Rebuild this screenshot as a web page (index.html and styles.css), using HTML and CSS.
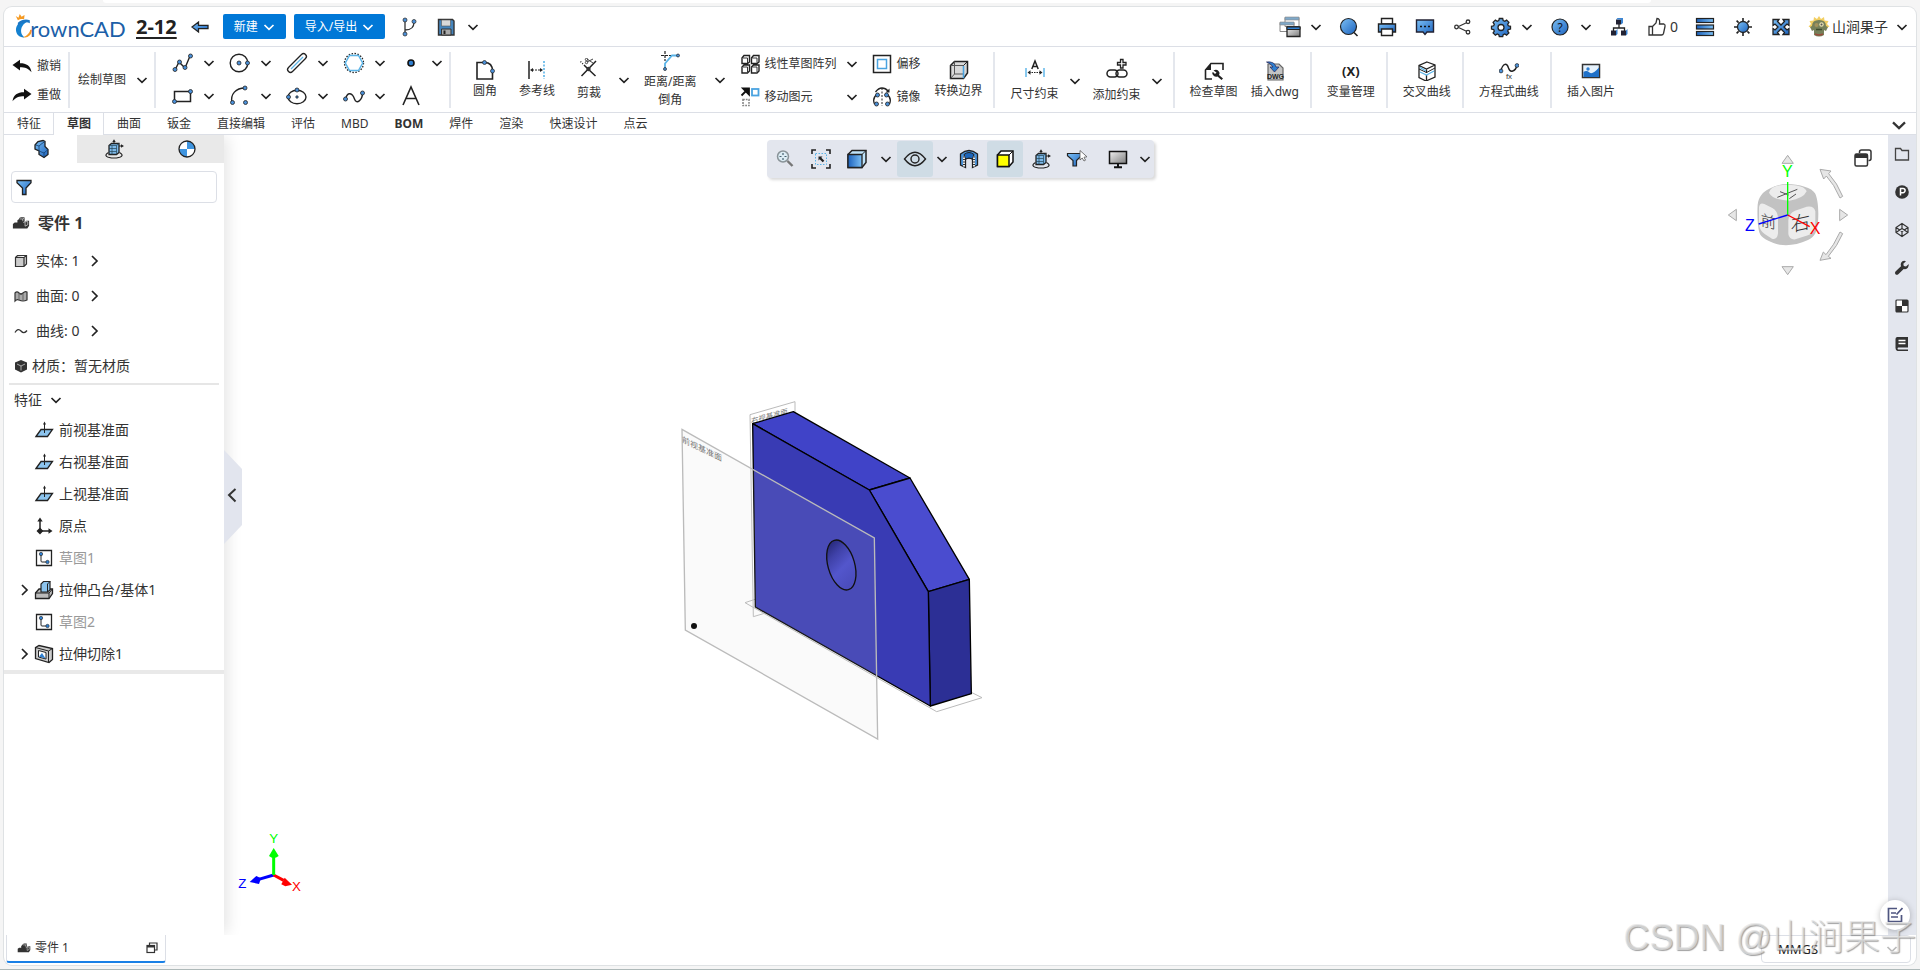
FILE: index.html
```html
<!DOCTYPE html>
<html lang="zh-CN">
<head>
<meta charset="utf-8">
<title>CrownCAD 2-12</title>
<link rel="stylesheet" href="styles.css">
</head>
<body>
<svg class="sprite" width="0" height="0" aria-hidden="true">
  <defs>
    <linearGradient id="blue" x1="0" y1="0" x2="1" y2="1"><stop offset="0" stop-color="#7cc0f5"/><stop offset="1" stop-color="#1c62bd"/></linearGradient>
    <linearGradient id="blueH" x1="0" y1="0" x2="1" y2="0"><stop offset="0" stop-color="#1c62bd"/><stop offset="1" stop-color="#7cc0f5"/></linearGradient>
    <linearGradient id="gray" x1="0" y1="0" x2="1" y2="1"><stop offset="0" stop-color="#f0f0f0"/><stop offset="1" stop-color="#7c7c7c"/></linearGradient>
    <linearGradient id="hole" x1="0" y1="0" x2="0.3" y2="1"><stop offset="0" stop-color="#1d1f66"/><stop offset="0.35" stop-color="#3f41a8"/><stop offset="0.65" stop-color="#5356cc"/><stop offset="1" stop-color="#4b4dbd"/></linearGradient>
  </defs>
  <symbol id="down" viewBox="0 0 12 12"><path d="M1.500 4L6 8.300 10.500 4" fill="none" stroke="currentColor" stroke-width="1.700"/></symbol>
  <symbol id="next" viewBox="0 0 12 12"><path d="M3 1l5 5-5 5" fill="none" stroke="currentColor" stroke-width="1.700"/></symbol>
  <symbol id="plane" viewBox="0 0 20 20"><path d="M2 16.500L7 9.500h11.500l-5 7z" fill="#8cc4ee" stroke="#222" stroke-width="1.300"/><path d="M10.500 13V3" stroke="#222"/><path d="M9 4.500l1.500-3L12 4.500z" fill="#222"/></symbol>
  <symbol id="sketch" viewBox="0 0 20 20"><path d="M2.500 2.500h15v15h-15z" fill="#fff" stroke="#222" stroke-width="1.300"/><path d="M7 6v7q0 1 1 1h5" fill="none" stroke="#222"/><circle cx="7" cy="6" r="1.700" fill="#2f7fd0" stroke="#222" stroke-width=".6"/><circle cx="13.500" cy="14" r="1.700" fill="#2f7fd0" stroke="#222" stroke-width=".6"/></symbol>
  <symbol id="part" viewBox="0 0 20 14"><path d="M1 13V8l2-1.500h3V4l2-1.500V1.500L10 .5h4v5l2-1h3v5.500L17 13z" fill="#333"/><path d="M8.500 2.500h3.500V5M12 2.500L14 1M12.500 6.500l2-1v5l3-1.500V5.500h-3" fill="none" stroke="#ddd" stroke-width=".8"/></symbol>
  <symbol id="turn" viewBox="0 0 20 20"><path d="M4.500 13.500C-1 16.500 3 19 10 19s11-2.500 5.500-5.500" fill="none" stroke="#222" stroke-width="1.200"/><path d="M5 6.500l2.500-2H15v9l-2.500 2H5z" fill="#7db8e8" stroke="#222" stroke-width="1.300"/><path d="M5 6.500h7.500v9M12.500 6.500L15 4.500M5 9.500h7.500M5 12.500h7.500M8 6.500v9" fill="none" stroke="#245" stroke-width=".7"/><path d="M10 4.500V2M15 7h3" stroke="#222"/><path d="M8.300 3L10 .3 11.700 3zM17 5.200L20 7l-3 1.800z" fill="#222"/></symbol>
  <symbol id="filter" viewBox="0 0 18 18"><path d="M2 2.500h14v2.200L11 10v6.500H7.500V10L2 4.700z" fill="url(#blue)" stroke="#222" stroke-width="1.300"/></symbol>
  <symbol id="undo" viewBox="0 0 20 14"><path d="M.5 6L8 .8v3.400c6.500 0 10.500 2.500 11.500 9C16.500 9.500 13 8.200 8 8.200v3.300z" fill="#111"/></symbol>
</svg>

<div class="browser-strip"></div>
<div class="app">
  <header class="header">
    <svg class="logo" width="112" height="28" viewBox="0 0 112 28" role="img" aria-label="CrownCAD">
      <path d="M15 7.500C7 6 1 11 1 17c0 5 4 8.500 9 8C6 22 5.500 17 7.500 13.500 9 10.500 12 8.500 15 7.500z" fill="#1581d0"/>
      <path d="M16 17c-1 4-4 7-8 7.500 4 1.500 9-.5 10-7.500z" fill="#f59a23"/><path d="M3 9.500C7 6 12 5.500 15.500 7v3C12 8 7 9 3 13z" fill="#1b77c5"/>
      <path d="M3 7L.8 2.500l2.800 1.700L5 .5l1.900 2.800L10 1.500l-.5 4.500C7 5.300 5 6 3 7z" fill="#f59a23"/>
      <text x="16" y="24" class="logo-text">rownCAD</text>
    </svg>
    <a class="doc-name" href="#">2-12</a>
    <button class="plain" aria-label="返回"><svg width="18" height="14" viewBox="0 0 18 14"><path d="M1 7l6.500-5v3.300H17v3.400H7.500V12z" fill="url(#blue)" stroke="#222" stroke-width="1.300"/></svg></button>
    <div class="primary-pair">
      <button class="primary">新建<svg class="chev"><use href="#down"/></svg></button>
      <button class="primary">导入/导出<svg class="chev"><use href="#down"/></svg></button>
    </div>
    <button class="plain" aria-label="分支"><svg class="i22" viewBox="0 0 22 22"><path d="M6 4v14M6 14c6 0 9-2 9-8" fill="none" stroke="#333" stroke-width="1.300"/><g fill="#4a90d9" stroke="#333" stroke-width=".8"><circle cx="6" cy="4" r="2"/><circle cx="15" cy="5.500" r="2"/><circle cx="6" cy="18" r="2"/></g></svg></button>
    <div class="pair-10">
      <button class="plain" aria-label="保存"><svg class="i22" viewBox="0 0 22 22"><path d="M3.500 3.500h14l1.500 1.500v14H3.500z" fill="#4585bd" stroke="#333" stroke-width="1.400"/><path d="M6.500 4h9v6h-9z" fill="#d9d9d9" stroke="#555" stroke-width=".6"/><path d="M6.500 13h9.500v6H6.500z" fill="#aaa" stroke="#333"/><path d="M8.500 14.500h2V18h-2z" fill="#222"/></svg></button>
      <button class="plain" aria-label="保存选项"><svg class="chev"><use href="#down"/></svg></button>
    </div>
    <nav class="header-right">
      <div class="pair-9"><button class="plain" aria-label="窗口"><svg class="i22" viewBox="0 0 22 22"><path d="M6 1.500h14v9H6zM1 6.500h14v9H1z" fill="#fff" stroke="#888"/><path d="M6 1h14v3H6zM1 6h14v3H1z" fill="#7fa9c9" stroke="#888" stroke-width=".6"/><path d="M8 11h13v9.500H8z" fill="url(#gray)" stroke="#222" stroke-width="1.300"/><path d="M8 11h13v2.500H8z" fill="#2f7fd0" stroke="#222"/></svg></button><button class="plain" aria-label="窗口选项"><svg class="chev"><use href="#down"/></svg></button></div>
      <button class="plain" aria-label="搜索"><svg class="i22" viewBox="0 0 22 22"><circle cx="10.500" cy="10.500" r="8" fill="url(#blue)" stroke="#222" stroke-width="1.200"/><path d="M16 16.500l3.500 3.500" stroke="#222" stroke-width="1.600"/></svg></button>
      <button class="plain" aria-label="打印"><svg class="i22" viewBox="0 0 22 22"><path d="M5.500 2.500h11V8h-11z" fill="#fff" stroke="#222" stroke-width="1.400"/><path d="M2.500 8h17v8h-17z" fill="url(#blue)" stroke="#222" stroke-width="1.400"/><path d="M5.500 13h11v6.500h-11z" fill="#fff" stroke="#222" stroke-width="1.400"/></svg></button>
      <button class="plain" aria-label="消息"><svg class="i22" viewBox="0 0 22 22"><path d="M2.500 4h17v12H13l-2 2.500L9 16H2.500z" fill="url(#blue)" stroke="#223" stroke-width="1.400"/><path d="M6 10.500h2M10 10.500h2M14 10.500h2" stroke="#111" stroke-width="1.600"/></svg></button>
      <button class="plain" aria-label="分享"><svg class="i22" viewBox="0 0 22 22"><path d="M5.500 11l10.500-5M5.500 11L16 16" stroke="#333" stroke-width="1.300"/><g fill="#fff" stroke="#333" stroke-width="1.300"><circle cx="4.500" cy="11" r="1.800"/><circle cx="16" cy="5.800" r="1.800"/><circle cx="16" cy="16.200" r="1.800"/></g></svg></button>
      <div class="pair-9"><button class="plain" aria-label="设置"><svg class="i22" viewBox="0 0 22 22"><g transform="translate(0 -1)"><path d="M9.300 3.500h3.400l.5 2.100 1.600.7 1.800-1.200 2.300 2.300-1.200 1.900.6 1.500 2.200.5v2.800l-2.200.5-.6 1.500 1.200 1.900-2.300 2.200-1.800-1.200-1.600.7-.5 2H9.300l-.5-2-1.600-.7-1.800 1.200-2.300-2.200 1.200-1.900-.6-1.500-2.200-.5v-2.800l2.200-.5.6-1.500-1.200-1.900 2.300-2.300 1.800 1.200 1.600-.7z" fill="url(#blue)" stroke="#222" stroke-width="1.300"/><circle cx="11" cy="12.500" r="3" fill="#fff" stroke="#222" stroke-width="1.300"/></g></svg></button><button class="plain" aria-label="设置选项"><svg class="chev"><use href="#down"/></svg></button></div>
      <div class="pair-9"><button class="plain" aria-label="帮助"><svg class="i22" viewBox="0 0 22 22"><circle cx="11" cy="11" r="8" fill="url(#blue)" stroke="#222" stroke-width="1.200"/><text x="11" y="15.500" text-anchor="middle" font-size="12" fill="#112">?</text></svg></button><button class="plain" aria-label="帮助选项"><svg class="chev"><use href="#down"/></svg></button></div>
      <button class="plain" aria-label="结构"><svg class="i22" viewBox="0 0 22 22"><path d="M11 8v4M5.500 15v-3h11v3" fill="none" stroke="#222" stroke-width="1.300"/><path d="M8 3.500h5v5H8zM3 14.500h5v5H3zM13 14.500h5v5h-5z" fill="#223"/><path d="M8 3.500L9.500 2H15l-2 1.500zM13 3.500L15 2v5l-2 1.500zM8 14.500L9.500 13v5L8 19.500zM18 14.500l1.500-1.500v5L18 19.500z" fill="#3c86d4"/></svg></button>
      <button class="plain like"><svg class="i22" viewBox="0 0 22 22"><path d="M3 10.500h3.500v8.500H3zM6.500 10.500L10 7l1-4.500c2.500 0 3 2 2.500 5.500H18q1.500.5 1 2.500l-1.500 7q-.5 1.500-2 1.500h-9" fill="none" stroke="#333" stroke-width="1.300"/></svg>0</button>
      <button class="plain" aria-label="列表"><svg class="i22" viewBox="0 0 22 22"><g fill="url(#blueH)" stroke="#222" stroke-width="1.200"><rect x="2.500" y="2.500" width="17" height="4"/><rect x="2.500" y="9" width="17" height="4"/><rect x="2.500" y="15.500" width="17" height="4"/></g></svg></button>
      <button class="plain" aria-label="亮度"><svg class="i22" viewBox="0 0 22 22"><path d="M11 2v3M11 17v3M2 11h3M17 11h3M4.600 4.600l2 2M15.400 15.400l2 2M4.600 17.400l2-2M15.400 6.600l2-2" stroke="#222" stroke-width="1.600"/><circle cx="11" cy="11" r="5.500" fill="url(#blue)" stroke="#222" stroke-width="1.300"/></svg></button>
      <button class="plain" aria-label="全屏"><svg class="i22" viewBox="0 0 22 22"><path d="M3 3.500h6L7.500 5.500l3.500 3.500 3.500-3.500L13 3.500h6v6L17 8l-3 3 3 3 2-1.500v6h-6l1.500-2-3.500-3.500-3.500 3.500 1.500 2H3v-6L5 14l3-3-3-3-2 1.500z" fill="url(#blue)" stroke="#222" stroke-width="1.300"/></svg></button>
      <button class="plain user"><svg class="i22" viewBox="0 0 22 22"><path d="M11 0l2 3 3-2 .5 3.500 4 .5-1.500 3 2.500 2.500-3 1.500H3.500L.5 10.500 3 8 1.500 5l4-.5L6 1l3 2z" fill="#f2cf63"/><path d="M4 10q0-6 7-6t7 6l2 1-2 4-2-1v5q-5 3-10 0v-5l-2 1-2-4z" fill="#76805a"/><circle cx="8.500" cy="9" r="2" fill="#a3925c"/><circle cx="13.500" cy="8.500" r="2.200" fill="#e6dfb0"/><circle cx="13.500" cy="8.500" r="1" fill="#555"/><path d="M8 13.500h6" stroke="#3e4a2d" stroke-width="1.500"/><path d="M7 18q4 2 8 0" stroke="#9b4b3c" stroke-width="1.500" fill="none"/></svg><span>山涧果子</span><svg class="chev"><use href="#down"/></svg></button>
    </nav>
  </header>

  <div class="ribbon">
    <div class="group history">
      <button class="row-tool"><svg width="20" height="14"><use href="#undo"/></svg>撤销</button>
      <button class="row-tool"><svg class="flip" width="20" height="14"><use href="#undo"/></svg>重做</button>
    </div>
    <div class="group draw"><button class="plain draw-btn">绘制草图<svg class="chev"><use href="#down"/></svg></button></div>
    <div class="group shapes">
      <button class="shape" aria-label="折线"><svg class="i24" viewBox="0 0 24 24"><path d="M4 19l4-8 6 6 5-12" fill="none" stroke="#222" stroke-width="1.400"/><g fill="#4a90d9" stroke="#222" stroke-width=".8"><circle cx="4" cy="18.500" r="2"/><circle cx="8.500" cy="11" r="2"/><circle cx="14" cy="16.500" r="2"/><circle cx="19.500" cy="5" r="2"/></g></svg><svg class="chev"><use href="#down"/></svg></button>
      <button class="shape" aria-label="圆"><svg class="i24" viewBox="0 0 24 24"><circle cx="11" cy="12" r="8.800" fill="none" stroke="#222" stroke-width="1.400"/><g fill="#4a90d9" stroke="#222" stroke-width=".8"><circle cx="11" cy="12" r="2"/><circle cx="19.500" cy="12" r="2"/></g></svg><svg class="chev"><use href="#down"/></svg></button>
      <button class="shape" aria-label="直槽口"><svg class="i24" viewBox="0 0 24 24"><path d="M5.500 18.500l13-13" stroke="#222" stroke-width="7" stroke-linecap="round"/><path d="M5.500 18.500l13-13" stroke="#fff" stroke-width="4.400" stroke-linecap="round"/><path d="M6 18L18 6" stroke="#5ab4e8" stroke-width="1.300"/></svg><svg class="chev"><use href="#down"/></svg></button>
      <button class="shape" aria-label="多边形"><svg class="i24" viewBox="0 0 24 24"><circle cx="12" cy="12" r="9.500" fill="none" stroke="#222" stroke-width="1.300" stroke-dasharray="1.500 1.500"/><path d="M7.500 4.500h9l4.200 7.500-4.200 7.500h-9L3.300 12z" fill="none" stroke="#5ab4e8" stroke-width="1.500"/></svg><svg class="chev"><use href="#down"/></svg></button>
      <button class="shape" aria-label="点"><svg class="i24" viewBox="0 0 24 24"><circle cx="12" cy="12" r="3" fill="#2f7fd0" stroke="#111" stroke-width="1.600"/></svg><svg class="chev"><use href="#down"/></svg></button>
      <button class="shape" aria-label="矩形"><svg class="i24" viewBox="0 0 24 24"><path d="M3.500 7.500h16v10h-16z" fill="none" stroke="#222" stroke-width="1.500"/><g fill="#4a90d9" stroke="#222" stroke-width=".8"><circle cx="19.500" cy="7.500" r="2"/><circle cx="3.500" cy="17.500" r="2"/></g></svg><svg class="chev"><use href="#down"/></svg></button>
      <button class="shape" aria-label="圆弧"><svg class="i24" viewBox="0 0 24 24"><path d="M4 19C2 10 8 4 17 4" fill="none" stroke="#222" stroke-width="1.400"/><g fill="#4a90d9" stroke="#222" stroke-width=".8"><circle cx="4.500" cy="18.500" r="2"/><circle cx="17" cy="4" r="2"/><circle cx="17.500" cy="18.500" r="2"/></g></svg><svg class="chev"><use href="#down"/></svg></button>
      <button class="shape" aria-label="椭圆"><svg class="i24" viewBox="0 0 24 24"><ellipse cx="12" cy="13" rx="9" ry="6.800" fill="none" stroke="#222" stroke-width="1.400"/><g fill="#4a90d9" stroke="#222" stroke-width=".8"><circle cx="12" cy="6" r="2"/><circle cx="3.500" cy="13" r="2"/><circle cx="12" cy="13" r="1.200"/></g></svg><svg class="chev"><use href="#down"/></svg></button>
      <button class="shape" aria-label="样条"><svg class="i24" viewBox="0 0 24 24"><path d="M3.500 15c2-8 7-6 9 0s8 1 8-6" fill="none" stroke="#222" stroke-width="1.400"/><g fill="#4a90d9" stroke="#222" stroke-width=".8"><circle cx="3.500" cy="15" r="2"/><circle cx="20.500" cy="9" r="2"/></g></svg><svg class="chev"><use href="#down"/></svg></button>
      <button class="shape" aria-label="文字"><svg class="i24" viewBox="0 0 24 24"><path d="M4 21l8-18 8 18M7 14.500h10" fill="none" stroke="#222" stroke-width="1.600"/></svg></button>
    </div>
    <div class="group edit">
      <div class="edit-a">
        <button class="tool"><svg class="i20" viewBox="0 0 20 20"><path d="M2 2.500h7.500c5 0 8 3 8 8.500v8H2z" fill="none" stroke="#222" stroke-width="1.600"/><g fill="#4a90d9" stroke="#222" stroke-width=".7"><circle cx="9.500" cy="2.500" r="2"/><circle cx="17.500" cy="11" r="2"/></g></svg>圆角</button>
        <button class="tool"><svg class="i20" viewBox="0 0 20 20"><path d="M2 1v18" stroke="#222" stroke-width="1.500"/><path d="M17 1v18" stroke="#5ab4e8" stroke-width="1.600" stroke-dasharray="2 1.500"/><path d="M5 10h9" stroke="#222" stroke-dasharray="2 1"/><path d="M3 10l3-2v4zM16 10l-3-2v4z" fill="#222"/></svg>参考线</button>
        <div class="split"><button class="tool loose"><svg class="i20" viewBox="0 0 20 20"><path d="M2.500 18L17 3M8 10l8.500 8M8 10L5 7" stroke="#222" stroke-width="1.500"/><path d="M1.500 3.500L5 7" stroke="#222" stroke-width="1.300" stroke-dasharray="1 1.500"/><circle cx="9.500" cy="11" r="2.200" fill="#333"/><path d="M8 4l6-3M8 1l6 4" stroke="#444"/><circle cx="7.500" cy="1.500" r="1.200" fill="none" stroke="#444"/><circle cx="7.500" cy="4.500" r="1.200" fill="none" stroke="#444"/></svg>剪裁</button><button class="plain" aria-label="剪裁选项"><svg class="chev"><use href="#down"/></svg></button></div>
      </div>
      <div class="split"><button class="tool"><svg class="i20" viewBox="0 0 20 20"><path d="M1 4.500h10M5 0v10" stroke="#222" stroke-width="1.200" stroke-dasharray="3 1"/><path d="M5 18v-5.500L12 4.500h6" fill="none" stroke="#5ab4e8" stroke-width="1.800"/><g fill="#4a90d9" stroke="#222" stroke-width=".7"><circle cx="5" cy="18" r="1.500"/><circle cx="18" cy="4.500" r="1.500"/></g></svg>距离/距离<br>倒角</button><button class="plain" aria-label="倒角选项"><svg class="chev"><use href="#down"/></svg></button></div>
      <div class="stack">
        <button class="row-tool wide"><svg class="i20" viewBox="0 0 20 20"><g fill="#fff" stroke="#222" stroke-width="1.400"><path d="M2 4l2-2.500h5.500V8l-2 1.500H2zM11.500 4l2-2.500H19V8l-2 1.500h-5.500zM2 13l2-2h5.500v6l-2 2H2zM11.500 13l2-2H19v6l-2 2h-5.500z"/><path d="M2 4h5.500v5M11.500 4H17v5M2 13h5.500v5.500M11.500 13H17v5.500" stroke-width=".9"/></g></svg><span>线性草图阵列</span><svg class="chev"><use href="#down"/></svg></button>
        <button class="row-tool wide"><svg class="i20" viewBox="0 0 20 20"><path d="M1.500 8.500l5-5M3 1.500h6v6z" fill="#111" stroke="#111" stroke-width="1.800"/><rect x="12" y="2" width="6.500" height="6.500" fill="#fff" stroke="#4aa3e0" stroke-width="1.800"/><rect x="3" y="12.500" width="6" height="6" fill="none" stroke="#888" stroke-width="1.600" stroke-dasharray="1.800 1"/></svg><span>移动图元</span><svg class="chev"><use href="#down"/></svg></button>
      </div>
      <div class="stack">
        <button class="row-tool"><svg class="i20" viewBox="0 0 20 20"><rect x="1.500" y="1.500" width="17" height="17" fill="#fff" stroke="#222" stroke-width="1.500"/><rect x="5.500" y="5.500" width="9" height="9" fill="#fff" stroke="#4aa3e0" stroke-width="1.500"/></svg>偏移</button>
        <button class="row-tool"><svg class="i20" viewBox="0 0 20 20"><path d="M10 1v18" stroke="#222" stroke-dasharray="2 1.500"/><path d="M3.500 5Q6.500 1 10 1t6 3M5 7.500Q0 11 2.500 17M15 7.500q5 3.500 2.500 9.500" fill="none" stroke="#222" stroke-width="1.300"/><path d="M17.500 1.500v4h-4z" fill="#222"/><g fill="#4a90d9" stroke="#222" stroke-width=".8"><circle cx="5.500" cy="8" r="2"/><circle cx="14.500" cy="8" r="2"/><circle cx="4.500" cy="17" r="2"/><circle cx="15.500" cy="17" r="2"/></g></svg>镜像</button>
      </div>
      <button class="tool"><svg class="i20" viewBox="0 0 20 20"><path d="M1.500 5.500l4-4h13V13l-4 5.500h-13z" fill="#d8d8d8" stroke="#222" stroke-width="1.500"/><path d="M1.500 5.500h13v13M5.500 1.500V14M1.500 18.500L5.500 14h9" fill="none" stroke="#555"/><path d="M14.500 5.500l4-4" stroke="#222"/><path d="M14.500 6v12" stroke="#4aa3e0" stroke-width="1.600"/></svg>转换边界</button>
    </div>
    <div class="group constrain">
      <div class="split tight"><button class="tool loose"><svg class="i20" viewBox="0 0 20 20"><path d="M1 9v9M19 9v9" stroke="#6bbcec" stroke-width="1.600"/><path d="M4 13.500h12" stroke="#222" stroke-dasharray="1.500 1"/><path d="M2.500 13.500l3-2.200v4.400zM17.500 13.500l-3-2.200v4.400z" fill="#222"/><path d="M6.800 10L10 2l3.200 8M8 7.500h4" fill="none" stroke="#222" stroke-width="1.500"/></svg>尺寸约束</button><button class="plain" aria-label="尺寸约束选项"><svg class="chev"><use href="#down"/></svg></button></div>
      <div class="split tight"><button class="tool loose"><svg class="i22" viewBox="0 0 22 22"><rect x="1" y="12" width="11" height="7" rx="3.500" fill="none" stroke="#222" stroke-width="1.500"/><rect x="10" y="12" width="11" height="7" rx="3.500" fill="none" stroke="#222" stroke-width="1.500"/><path d="M14.500 1.500h2.500V4.500h3V7h-3v3h-2.500V7h-3V4.500h3z" fill="#fff" stroke="#222" stroke-width="1.300"/></svg>添加约束</button><button class="plain" aria-label="添加约束选项"><svg class="chev"><use href="#down"/></svg></button></div>
    </div>
    <div class="group check">
      <button class="tool"><svg class="i20" viewBox="0 0 20 20"><path d="M8 18H1.500V9L7 2.500h12V9" fill="none" stroke="#222" stroke-width="1.600"/><path d="M1.500 9L7 2.500V9z" fill="#222"/><path d="M9.500 9.500q3-1.500 5 .5t.5 4l4 3.500-1.500 1.500-4-3.500q-3 1-4.500-1.500t0-3l2 2 1.500-1.500z" fill="#222"/></svg>检查草图</button>
      <button class="tool"><svg class="i20" viewBox="0 0 20 20"><path d="M3 3h11l4 4v12H3z" fill="#c4c4c4" stroke="#666" stroke-width="1.200"/><text x="10.500" y="17.500" text-anchor="middle" class="dwg">DWG</text><path d="M1.500 1q8-1 9.500 5h3l-4.500 5L5 6h3Q6 2.500 1.500 1z" fill="#2f7fd0" stroke="#225" stroke-width=".7"/></svg>插入dwg</button>
    </div>
    <div class="group"><button class="tool"><span class="var">(X)</span>变量管理</button></div>
    <div class="group"><button class="tool"><svg class="i20" viewBox="0 0 20 20"><path d="M10 1l8 3v12l-9 4-7-3.500V4.500zM2 4.500L9.500 8 18 4M9.500 8v4M9.500 14v5.500" fill="none" stroke="#222" stroke-width="1.300"/><path d="M2 8l7.500 3.500L18 7" fill="none" stroke="#222" stroke-width="1"/><path d="M3 11l6.500 3L17 10M3 6.500l6 3.500" fill="none" stroke="#5ab4e8" stroke-width="1.200"/></svg>交叉曲线</button></div>
    <div class="group"><button class="tool"><svg class="i20" viewBox="0 0 20 20"><path d="M1.500 11C4 1 8 2 9.500 7s7 4 8.500-3" fill="none" stroke="#222" stroke-width="1.400"/><g fill="#4a90d9" stroke="#222" stroke-width=".7"><circle cx="2" cy="10" r="1.900"/><circle cx="18" cy="4.500" r="1.900"/></g><text x="10" y="18" text-anchor="middle" class="fx">fx</text></svg>方程式曲线</button></div>
    <div class="group last"><button class="tool"><svg class="i20" viewBox="0 0 20 20"><rect x="1.500" y="3.500" width="17" height="13" fill="#e6f2fc" stroke="#333" stroke-width="1.500"/><path d="M2.500 11q3-2 6 .5t9.500-5V16H2.500z" fill="#1f71c9"/><circle cx="7" cy="8" r="1.700" fill="#2f7fd0"/></svg>插入图片</button></div>
  </div>

  <nav class="tabs">
    <button class="tab first">特征</button><button class="tab active">草图</button><button class="tab">曲面</button><button class="tab">钣金</button><button class="tab">直接编辑</button><button class="tab">评估</button><button class="tab">MBD</button><button class="tab strong">BOM</button><button class="tab">焊件</button><button class="tab">渲染</button><button class="tab">快速设计</button><button class="tab">点云</button>
    <button class="plain collapse" aria-label="收起"><svg width="16" height="16"><use href="#down"/></svg></button>
  </nav>

  <main class="body">
    <aside class="side">
      <div class="side-tabs">
        <button class="side-tab on" aria-label="特征树"><svg class="i20" viewBox="0 0 20 20"><path d="M4 6l3-3.500 5-1 2 1v5l3 3v5l-4 3-5-3v-3.500l-4-2z" fill="url(#blue)" stroke="#222" stroke-width="1.300"/><path d="M4.500 6L8 7v5l5 2v4M8 7l3-2.500 3-2M13 14l4-3.500" fill="none" stroke="#14406f" stroke-width=".8"/></svg></button>
        <button class="side-tab" aria-label="视图"><svg class="i20"><use href="#turn"/></svg></button>
        <button class="side-tab" aria-label="外观"><svg class="i20" viewBox="0 0 20 20"><circle cx="10" cy="10" r="8" fill="#fff"/><path d="M10 10V2a8 8 0 0 1 8 8zM10 10v8a8 8 0 0 1-8-8z" fill="#3f95e0"/><circle cx="10" cy="10" r="8" fill="none" stroke="#222" stroke-width="1.300"/></svg></button>
      </div>
      <label class="search"><svg width="18" height="18"><use href="#filter"/></svg><input type="text" aria-label="过滤"></label>
      <h1 class="part-title"><svg width="18" height="14"><use href="#part"/></svg>零件 1</h1>
      <ul class="stats">
        <li><svg class="i14" viewBox="0 0 14 14"><path d="M1.500 3.500l2-2h9v8.500l-2.500 2.500H1.500zM10 3.500v9M1.500 3.500H10l2.500-2" fill="#ccc" stroke="#333" stroke-width="1.200"/></svg><span>实体: 1</span><svg class="chev"><use href="#next"/></svg></li>
        <li><svg class="i14" viewBox="0 0 14 14"><path d="M1 4q2-2 4 0t4 0 4-1v8q-2 1-4 1t-4-1-4 1z" fill="#aaa" stroke="#333" stroke-width="1.200"/><path d="M5 4v7.500M9 4.500V12" stroke="#666"/></svg><span>曲面: 0</span><svg class="chev"><use href="#next"/></svg></li>
        <li><svg class="i14" viewBox="0 0 14 14"><path d="M1 8.500q3-5 6-1.500t6-.5" fill="none" stroke="#333" stroke-width="1.300"/></svg><span>曲线: 0</span><svg class="chev"><use href="#next"/></svg></li>
        <li class="material"><svg class="i14" viewBox="0 0 14 14"><path d="M7 1l6 2.500v7L7 13.500 1 10.500v-7z" fill="#333"/><path d="M3 5l4 2 4-2M7 7v4.500" fill="none" stroke="#ccc" stroke-width=".8"/></svg><span>材质：暂无材质</span></li>
      </ul>
      <button class="tree-head">特征<svg class="chev"><use href="#down"/></svg></button>
      <ul class="tree">
        <li><svg class="i20"><use href="#plane"/></svg>前视基准面</li>
        <li><svg class="i20"><use href="#plane"/></svg>右视基准面</li>
        <li><svg class="i20"><use href="#plane"/></svg>上视基准面</li>
        <li><svg class="i20" viewBox="0 0 20 20"><path d="M6 4v11h10" fill="none" stroke="#222" stroke-width="1.500"/><path d="M3.300 5.500L6 1.500l2.700 4zM14.500 12.300l4 2.700-4 2.700zM6 11.500L9.300 15 6 18.500 2.500 15z" fill="#222"/></svg>原点</li>
        <li class="muted"><svg class="i20"><use href="#sketch"/></svg>草图1</li>
        <li class="open"><button class="plain" aria-label="展开"><svg class="chev"><use href="#next"/></svg></button><svg class="i20" viewBox="0 0 20 20"><path d="M1.500 13L5 9h13.500v4.500L15 18.500H1.500z" fill="#bbb" stroke="#222" stroke-width="1.300"/><path d="M1.500 13H15l3.500-4M15 13v5" fill="none" stroke="#222"/><path d="M7 12V4l2.500-2.500H16V10l-2.500 2z" fill="#8cc4ee" stroke="#222" stroke-width="1.200"/><path d="M13.500 12V4L16 1.500" fill="none" stroke="#222"/></svg>拉伸凸台/基体1</li>
        <li class="muted"><svg class="i20"><use href="#sketch"/></svg>草图2</li>
        <li class="open"><button class="plain" aria-label="展开"><svg class="chev"><use href="#next"/></svg></button><svg class="i20" viewBox="0 0 20 20"><path d="M1.500 3.500L5 1.500l13.500 3v11L15 18.500l-13.500-4z" fill="#ccc" stroke="#222" stroke-width="1.300"/><path d="M1.500 3.500l13 3.500v11M14.500 7l4-2.500" fill="none" stroke="#222"/><path d="M4.500 6.500L12 8.500v6.500l-7.500-2z" fill="#fff" stroke="#222"/><path d="M8 9l3.500 5.500-6.500-2z" fill="#2f7fd0"/></svg>拉伸切除1</li>
      </ul>
    </aside>

    <section class="canvas">
      <button class="handle" aria-label="收起侧栏"><svg width="18" height="94" viewBox="0 0 18 94"><path d="M0 0l18 19v56L0 94z" fill="#e2e5ee"/><path d="M11.500 39L5 45l6.500 6.500" fill="none" stroke="#333" stroke-width="2"/></svg></button>

      <div class="view-bar">
        <button aria-label="缩放"><svg class="i20" viewBox="0 0 20 20"><circle cx="8" cy="7.500" r="5.500" fill="#dcecf4" stroke="#8a9499" stroke-width="1.500"/><path d="M12.500 12l5 5" stroke="#777" stroke-width="2.400"/><path d="M8 4v2M8 9v2M4.500 7.500h2M9.500 7.500h2" stroke="#44606e" stroke-width="1.200"/></svg></button>
        <button aria-label="适合窗口"><svg class="i20" viewBox="0 0 20 20"><path d="M1 5V1h4M15 1h4v4M19 15v4h-4M5 19H1v-4" fill="none" stroke="#222" stroke-width="1.600"/><rect x="4.500" y="4.500" width="11" height="11" fill="none" stroke="#5ab4e8" stroke-dasharray="1.500 1.500"/><path d="M7.500 7.500h4l-1.200 1.200 3 3-1.600 1.600-3-3-1.200 1.200z" fill="#222"/></svg></button>
        <button aria-label="显示样式"><svg class="i20" viewBox="0 0 20 20"><path d="M1 5.500L5 1.500h14v12L15 18.500H1z" fill="#bfe3fa" stroke="#222" stroke-width="1.500"/><path d="M1 5.500h14v13H1z" fill="url(#blueH)" stroke="#222" stroke-width="1.300"/><path d="M15 5.500l4-4" stroke="#222"/></svg></button>
        <button class="arrow roomy" aria-label="显示选项"><svg class="chev"><use href="#down"/></svg></button>
        <button class="lit" aria-label="可见性"><svg width="24" height="20" viewBox="0 0 24 20"><path d="M1.500 10Q12-3.500 22.500 10 12 23.500 1.500 10z" fill="none" stroke="#222" stroke-width="1.400"/><circle cx="12" cy="10" r="4" fill="none" stroke="#222" stroke-width="1.400"/></svg></button>
        <button class="arrow" aria-label="可见性选项"><svg class="chev"><use href="#down"/></svg></button>
        <button aria-label="剖视"><svg class="i20" viewBox="0 0 20 20"><path d="M1.500 5Q10-2 18.500 5v11l-5 2.500V10q-3.500-2-7 0v8.500l-5-2.500z" fill="#4a94dc" stroke="#222" stroke-width="1.300"/><path d="M5 5.500Q10 1.500 15 5.500L13.500 10q-3.500-2-7 0z" fill="#1d66ba" stroke="#222"/><path d="M5 7.500v10M15 7.500v10" stroke="#e8e8e8" stroke-width="2"/><path d="M5 7.500v10M15 7.500v10" stroke="#333" stroke-width="2" stroke-dasharray="1 1.500"/></svg></button>
        <button class="lit" aria-label="着色"><svg class="i20" viewBox="0 0 20 20"><path d="M2.500 6L6 2h12v11l-4 4.500H2.500z" fill="#fff" stroke="#111" stroke-width="1.500"/><path d="M2.500 6H14v11.500H2.500z" fill="#ff0" stroke="#111" stroke-width="1.500"/><path d="M14 6l4-4" stroke="#111"/></svg></button>
        <button aria-label="旋转"><svg class="i20"><use href="#turn"/></svg></button>
        <button aria-label="选择过滤"><svg width="22" height="20" viewBox="0 0 22 20"><path d="M1.500 4.500h14v2.200l-5 4.800V17H7v-5.500L1.500 6.700z" fill="url(#blue)" stroke="#222" stroke-width="1.200"/><path d="M14 1.500v9.500l2.200-2 1.800 3 1.500-.8-1.500-3 3-.4z" fill="#fff" stroke="#555" stroke-width=".8"/></svg></button>
        <button class="wide-gap" aria-label="显示器"><svg class="i20" viewBox="0 0 20 20"><rect x="1.500" y="2.500" width="17" height="12" fill="url(#gray)" stroke="#111" stroke-width="1.500"/><path d="M10 15v3M6 18.200h8" stroke="#111" stroke-width="2"/></svg></button>
        <button class="arrow" aria-label="显示器选项"><svg class="chev"><use href="#down"/></svg></button>
      </div>

      <button class="windows" aria-label="多视图"><svg width="18" height="18" viewBox="0 0 18 18"><path d="M5.500 4V3q0-2 2-2H15q2 0 2 2v6.500q0 2-2 2h-.5" fill="none" stroke="#333" stroke-width="1.500"/><rect x="1" y="5" width="12.500" height="12" rx="1.500" fill="#fff" stroke="#333" stroke-width="1.500"/><path d="M1 5h12.500v4H1z" fill="#333"/></svg></button>

      <svg class="view-cube" width="125" height="127" viewBox="75 120 375 381">
        <path d="M262 222c35 0 75 12 83 28 8 14 12 50 9 85-2 30-10 45-30 55-30 14-60 18-85 14-25-6-50-18-58-30-8-14-10-60-8-90 3-25 15-38 35-48 18-9 35-14 54-14z" fill="#c2c2c2"/>
        <path d="M207 248q5-24 55-24t58 20q-10 22-52 28-50-2-61-24zM177 292q2-16 16-10l24 12q15 8 17 28v48q-2 20-18 16l-22-14q-16-10-17-32zM265 330q2-20 20-28l35-12q22-4 26 14v48q-2 16-22 24l-38 12q-18 2-21-16z" fill="#ececec"/>
        <text class="face" x="0" y="0" font-size="46" transform="translate(182 346) skewY(14)">前</text>
        <text class="face" x="0" y="0" font-size="58" transform="translate(272 366) skewY(-12)">右</text>
        <path d="M232 262l60-24M240 245l26 10M268 266l20-14" fill="none" stroke="#555" stroke-width="3"/>
        <g fill="#e6e6e6" stroke="#aaa" stroke-width="3"><path d="M263 136l17 24h-34zM263 494l-17-24h34zM85 315l24-17v34zM443 315l-24-17v34z"/><path d="M360 178l33 5-7 8q26 28 42 68l-8 5q-18-42-41-66l-8 9zM360 451l33-6-8-6q28-32 43-68l-8-5q-18 40-42 68l-8-8z"/></g>
        <g stroke-width="4" fill="none"><path d="M263 216v99" stroke="#0f0"/><path d="M263 315l-87 27" stroke="#00f"/><path d="M263 315l66 35" stroke="#f00"/></g>
        <text class="axis big" x="262" y="201" fill="#0f0">Y</text><text class="axis big" x="150" y="362" fill="#00f">Z</text><text class="axis big" x="345" y="373" fill="#f00">X</text>
      </svg>

      <svg class="model" width="340" height="360" viewBox="0 0 1020 1080">
        <path d="M280 680L270 74 405 35V150M280 680l40-12M285 628l-30 10 575 327 136-42-40-20" fill="none" stroke="#bbb" stroke-width="3"/>
        <text class="plane-name" transform="translate(273 101) skewY(-15)" x="0" y="0" font-size="22">右视基准面</text>
        <g stroke="#000" stroke-width="4" stroke-linejoin="round">
          <path d="M278 101L400 65 750 264 628 300z" fill="#4043c8"/>
          <path d="M628 300l122-36 178 304-123 37z" fill="#4a4ccf"/>
          <path d="M805 605l123-37 6 343-123 37z" fill="#2c2f95"/>
          <path d="M278 101l350 199 177 305 6 343-525-297z" fill="#393bb4"/>
        </g>
        <path d="M66 118l577 326 10 603L76 720z" fill="#cdcdcd" fill-opacity=".11" stroke="#bbb" stroke-width="4"/>
        <ellipse cx="544" cy="525" rx="40" ry="77" transform="rotate(-16 544 525)" fill="url(#hole)" stroke="#111" stroke-width="4"/>
        <text class="plane-name" transform="translate(66 156) skewY(26)" x="0" y="0" font-size="24">前视基准面</text>
        <circle cx="102" cy="708" r="9" fill="#111"/>
      </svg>

      <svg class="triad" width="66" height="64" viewBox="708 60 198 192">
        <g stroke-width="9"><path d="M821 195l-45 13" stroke="#00f"/><path d="M821 195l30 16" stroke="#f00"/><path d="M821 195v-60" stroke="#0f0"/></g>
        <path d="M821 114l15 24q-15 12-29 0z" fill="#0f0"/><path d="M749 216l20-18 14 7-6 17z" fill="#00f"/><path d="M876 224l-22-21-10 20 12 6z" fill="#f00"/>
        <text class="axis" x="821" y="98" fill="#0f0">Y</text><text class="axis" x="727" y="234" fill="#00f">Z</text><text class="axis" x="889" y="242" fill="#f00">X</text>
      </svg>
    </section>

    <nav class="rail">
      <button aria-label="文件夹"><svg class="i16" viewBox="0 0 16 16"><path d="M1.500 2.500h5l1.500 2h6.500v9.500h-13z" fill="none" stroke="#444" stroke-width="1.300"/></svg></button>
      <button aria-label="属性"><svg class="i16" viewBox="0 0 16 16"><circle cx="8" cy="8" r="6.800" fill="#333"/><path d="M6.500 11.500v-7H9a2 2 0 0 1 0 4.200H6.500" fill="none" stroke="#fff" stroke-width="1.500"/></svg></button>
      <button aria-label="模型"><svg class="i16" viewBox="0 0 16 16"><path d="M8 1.500l6 4v5l-6 4-6-4v-5zM2 5.500l6 4 6-4M2 10.500l6-4 6 4M8 1.500v5M8 9.500v5" fill="none" stroke="#333" stroke-width="1.200"/></svg></button>
      <button aria-label="工具"><svg class="i16" viewBox="0 0 16 16"><path d="M14.800 4L12 6.500 9.800 6l-.5-2.200L12 1.200Q8.500 0 7 3q-.6 1.600 0 3.200L1.500 11.500q-1.200 1.500 0 2.700t2.800 0L9.700 9q5 1 5.100-5z" fill="#333"/></svg></button>
      <button aria-label="材质"><svg class="i16" viewBox="0 0 16 16"><rect x="2" y="2" width="12" height="12" rx="1" fill="#fff" stroke="#333" stroke-width="1.200"/><path d="M8 2h6v6H8zM2 8h6v6H2z" fill="#333"/></svg></button>
      <button aria-label="文档"><svg class="i16" viewBox="0 0 16 16"><path d="M3 1h11v10.500H4q-1 1 0 2h10V15H3.500Q1.500 14.500 1.500 12V3Q1.500 1.500 3 1z" fill="#333"/><path d="M4.500 4.500h7M4.500 7.500h7" stroke="#fff" stroke-width="1.300"/></svg></button>
    </nav>
  </main>

  <footer class="foot">
    <button class="doc-tab"><svg width="14" height="10"><use href="#part"/></svg><span>零件 1</span><svg class="restore" width="12" height="12" viewBox="0 0 12 12"><path d="M3.500 3V1h7.500v7H9" fill="none" stroke="#333" stroke-width="1.200"/><rect x="1" y="3.500" width="7.500" height="7" fill="#fff" stroke="#333" stroke-width="1.200"/><path d="M1 3.500h7.500v2H1z" fill="#333"/></svg></button>
    <div class="units"><select aria-label="单位"><option>MMGS</option></select><svg class="chev"><use href="#down"/></svg></div>
  </footer>
  <button class="note" aria-label="备注"><svg class="i16" viewBox="0 0 16 16"><path d="M10 1.500H1.500v13h13V8M4 6h5M4 10h7M9.500 7.500l6-6.500" fill="none" stroke="#4f5680" stroke-width="1.700"/></svg></button>
  <div class="watermark">CSDN @山涧果子</div>
</div>
</body>
</html>
```

FILE: styles.css
```css
* { box-sizing: border-box; }
body {
  margin: 0;
  height: 100vh;
  display: flex;
  flex-direction: column;
  overflow: hidden;
  background: #f5f5f5;
  border-bottom: 1px solid #aeb9b9;
  font: 14px/20px "Noto Sans", "Noto Sans CJK SC", sans-serif;
  color: #333;
}
button { padding: 0; border: 0; background: none; font: inherit; color: inherit; cursor: pointer; }
svg { display: block; flex: none; }
ul { list-style: none; margin: 0; padding: 0; }
.sprite { position: absolute; }
.chev { width: 12px; height: 12px; color: #222; }
.i14 { width: 14px; height: 14px; }
.i16 { width: 16px; height: 16px; }
.i20 { width: 20px; height: 20px; }
.i22 { width: 22px; height: 22px; }
.i24 { width: 24px; height: 24px; }
.plain { display: flex; align-items: center; }

.browser-strip { flex: none; height: 3px; margin: 0 14% 4px 103px; background: #fff; border-radius: 0 0 8px 8px; }
.app {
  position: relative;
  flex: 1;
  min-height: 0;
  display: flex;
  flex-direction: column;
  margin: 0 4px 4px;
  background: #fff;
  border-radius: 8px;
  box-shadow: 0 0 0 1px #dfe2e4;
}

/* header */
.header { display: flex; align-items: center; gap: 14px; height: 40px; padding: 0 8px 0 11px; border-bottom: 1px solid #dcdfe6; }
.logo { width: 107px; overflow: visible; }
.logo-text { font: 23px Lato, sans-serif; fill: #1c5fa8; }
.doc-name { font-size: 20px; font-weight: 700; color: #222; text-decoration: underline; text-underline-offset: 3px; }
.primary-pair { display: flex; gap: 8px; }
.primary { display: flex; align-items: center; gap: 5px; height: 25px; padding: 0 11px; background: #0078d7; border-radius: 2px; color: #fff; font-size: 12px; }
.primary .chev { color: #fff; }
.pair-10 { display: flex; gap: 10px; }
.pair-9 { display: flex; gap: 9px; }
.header-right { display: flex; align-items: center; gap: 16px; margin-left: auto; }
.like { gap: 2px; }
.user { gap: 2px; }
.user .chev { margin-left: 6px; }

/* ribbon */
.ribbon { display: flex; height: 66px; padding: 5px 0 4px; border-bottom: 1px solid #dcdfe6; font-size: 12px; line-height: 18px; }
.group { display: flex; align-items: center; padding: 1px 11px 0 15px; border-right: 2px solid #e4e7ed; }
.group.last { border-right: 0; }
.row-tool { display: flex; align-items: center; gap: 5px; height: 20px; white-space: nowrap; }
.history { flex-direction: column; justify-content: center; gap: 9px; padding: 0 7px 0 8px; }
.flip { transform: scaleX(-1); }
.draw { padding: 0 6px 0 8px; }
.draw-btn { gap: 10px; }
.shapes { display: grid; grid-template-columns: repeat(5, 44px); align-content: center; gap: 9px 13px; padding: 0 6px 2px 15px; }
.shape { display: flex; align-items: center; gap: 8px; }
.edit { gap: 14px; padding: 0 10px 0 22px; }
.edit-a { display: flex; gap: 22px; align-items: center; }
.tool { display: flex; flex-direction: column; align-items: center; gap: 2px; white-space: nowrap; }
.tool.loose { gap: 6px; }
.split { display: flex; align-items: center; gap: 17px; }
.split.tight { gap: 10px; }
.stack { display: flex; flex-direction: column; gap: 13px; }
.row-tool.wide { width: 118px; }
.row-tool.wide .chev { margin-left: auto; }
.constrain { gap: 12px; padding: 1px 10px 0 16px; }
.check { gap: 13px; }
.var { height: 20px; line-height: 20px; font-size: 13px; font-weight: 700; color: #222; }
.dwg { font: 700 7px "Liberation Sans", sans-serif; fill: #222; }
.fx { font: 8px "Liberation Sans", sans-serif; fill: #333; }

/* ribbon tabs */
.tabs { display: flex; height: 22px; border-bottom: 1px solid #dcdfe6; }
.tab { height: 22px; padding: 0 13px; font-size: 12px; line-height: 20px; }
.tab.first { height: 21px; padding-right: 12px; border-right: 1px solid #dcdfe6; }
.tab.active { padding-right: 12px; background: #fff; border-right: 1px solid #dcdfe6; font-weight: 700; }
.tab.strong { font-weight: 700; }
.collapse { margin-left: auto; padding: 2px 9px 0 0; }

/* body */
.body { flex: 1; min-height: 0; display: flex; }
.side { position: relative; z-index: 1; width: 220px; flex: none; background: #fff; box-shadow: 6px 0 14px -2px rgba(0, 0, 0, .1); clip-path: inset(0 -20px 0 0); }
.side-tabs { display: grid; grid-template-columns: repeat(3, 1fr); height: 28px; }
.side-tab { display: grid; place-items: center; background: #e9e9e9; }
.side-tab.on { background: #fff; }
.search { display: flex; align-items: center; gap: 6px; height: 32px; margin: 8px 7px 0; padding: 0 3px; border: 1px solid #dcdfe6; border-radius: 4px; }
.search input { flex: 1; min-width: 0; border: 0; outline: 0; font: inherit; }
.part-title { display: flex; align-items: center; gap: 8px; height: 40px; margin: 0; padding-left: 8px; font-size: 16px; }
.stats { margin: 0 5px; border-bottom: 2px solid #e6e6e6; }
.stats li { display: flex; align-items: center; gap: 8px; height: 35px; padding-left: 5px; }
.stats .chev { margin-left: 2px; }
.stats .material { gap: 4px; }
.tree-head { display: flex; align-items: center; gap: 8px; height: 29px; padding-left: 10px; }
.tree { border-bottom: 4px solid #e9e9e9; }
.tree li { display: flex; align-items: center; gap: 5px; height: 32px; padding-left: 30px; }
.tree li.open { padding-left: 15px; }
.tree li.open .plain { margin-right: -2px; }
.tree .muted { color: #999; }

.canvas { position: relative; flex: 1; min-width: 0; overflow: hidden; }
.handle { position: absolute; left: 0; top: 315px; z-index: 2; }
.view-bar { position: absolute; left: 543px; top: 5px; display: flex; align-items: center; height: 38px; background: #e3e6ee; border-radius: 4px; box-shadow: 2px 2px 3px rgba(0, 0, 0, .15); }
.view-bar button { display: grid; place-items: center; width: 36px; height: 36px; }
.view-bar .lit { background: #cfdce5; border-radius: 3px; }
.view-bar .arrow { width: 18px; }
.view-bar .roomy { width: 22px; }
.view-bar .wide-gap { margin-left: 5px; }
.windows { position: absolute; right: 16px; top: 14px; }
.view-cube { position: absolute; right: 38px; top: 15px; }
.face { font-family: "Noto Sans CJK SC", sans-serif; font-weight: 300; fill: #333; }
.axis { font: 40px "Liberation Sans", sans-serif; text-anchor: middle; }
.axis.big { font-size: 48px; }
.model { position: absolute; left: 436px; top: 255px; }
.plane-name { font-family: "Noto Sans CJK SC", sans-serif; fill: #777; }
.triad { position: absolute; left: 12px; bottom: 41px; }

.rail { display: flex; flex-direction: column; width: 28px; flex: none; background: #e3e6ee; }
.rail button { display: grid; place-items: center; height: 38px; }

/* footer */
.foot { display: flex; align-items: flex-start; justify-content: space-between; height: 30px; padding: 0 5px 0 2px; }
.doc-tab { display: flex; align-items: center; gap: 4px; width: 160px; height: 28px; padding: 0 7px 0 10px; border: 1px solid #dcdfe6; border-top: 0; border-bottom: 2px solid #1a80e6; border-radius: 0 0 3px 3px; font-size: 12px; }
.restore { margin-left: auto; }
.units { display: flex; align-items: center; width: 150px; height: 28px; padding: 0 12px 0 16px; border: 1px solid #dcdfe6; border-radius: 4px; }
.units select { flex: 1; padding: 0; border: 0; appearance: none; background: none; font: inherit; font-size: 13px; color: #222; }
.units .chev { color: #bbb; }
.note { position: absolute; right: 6px; bottom: 35px; display: grid; place-items: center; width: 30px; height: 30px; border-radius: 50%; background: #fff; box-shadow: 0 1px 6px rgba(0, 0, 0, .25); }
.watermark { position: absolute; right: 0; bottom: 6px; font: 36px/42px "Liberation Sans", "Noto Sans CJK SC", sans-serif; font-weight: 300; color: rgba(228, 228, 228, .7); text-shadow: 1px 1px 1px rgba(120, 120, 120, .7); pointer-events: none; white-space: nowrap; }
```
